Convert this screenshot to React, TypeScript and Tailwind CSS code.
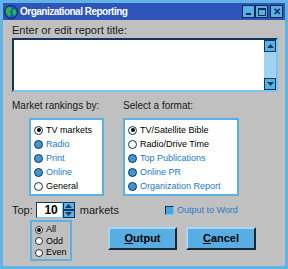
import React from 'react';

const font = { fontFamily: '"Liberation Sans", Arial, sans-serif' };

type Opt = { label: string; state: 'on' | 'off' | 'blue' };

const Radio = ({ state, size = 9 }: { state: Opt['state']; size?: number }) => (
  <span
    className={`relative inline-block shrink-0 rounded-full border border-[#14324f] ${
      state === 'blue' ? 'bg-[#3f97d6]' : 'bg-white'
    }`}
    style={{ width: size, height: size }}
  >
    {state === 'on' && (
      <span className="absolute left-1/2 top-1/2 h-[4px] w-[4px] -translate-x-1/2 -translate-y-1/2 rounded-full bg-black" />
    )}
  </span>
);

const OptionList = ({ items, className }: { items: Opt[]; className: string }) => (
  <div className={`flex flex-col border-2 border-[#5cb1e4] bg-white pt-[3px] ${className}`}>
    {items.map((it) => (
      <div key={it.label} className="flex h-[14.6px] items-center gap-[3px] pl-[3px]">
        <Radio state={it.state} />
        <span
          className={`text-[9px] leading-none ${it.state === 'blue' ? 'text-[#1f78c1]' : 'text-black'}`}
        >
          {it.label}
        </span>
      </div>
    ))}
  </div>
);

const Globe = () => (
  <svg width="14" height="14" viewBox="0 0 14 14">
    <circle cx="7" cy="7" r="6.5" fill="#1f56c8" stroke="#0b1f55" />
    <path d="M2.5 3 L6.5 1.5 L7.5 4.5 L5.5 6.5 L7 9 L5 12 L3 9.5 L1.5 6.5 Z" fill="#27b83a" />
    <path d="M8.5 4.5 L12 5 L12.5 8.5 L10 11 L8.5 8.5 Z" fill="#27b83a" />
  </svg>
);

const TitleBtn = ({ children }: { children: React.ReactNode }) => (
  <div className="flex h-[13px] w-[13px] items-center justify-center border border-[#0f2a55] bg-[#5cb1e4]">
    {children}
  </div>
);

const Arrow = ({ up }: { up?: boolean }) => (
  <svg width="7" height="4" viewBox="0 0 7 4">
    <path d={up ? 'M0 4 L3.5 0 L7 4 Z' : 'M0 0 L3.5 4 L7 0 Z'} fill="#173d66" />
  </svg>
);

export default function App() {
  return (
    <div className="h-[269px] w-[288px] bg-[#62b3e6] px-[3px] pt-[3px] pb-[3px]" style={font}>
      {/* Title bar */}
      <div className="flex h-[17px] items-center bg-[#2d55ba] pl-[1px] pr-[2px]">
        <Globe />
        <span className="ml-[2px] text-[10px] font-bold tracking-[-0.5px] text-white">
          Organizational Reporting
        </span>
        <div className="ml-auto flex">
          <TitleBtn>
            <span className="mt-[5px] h-[2px] w-[5px] bg-[#0f2a55]" />
          </TitleBtn>
          <TitleBtn>
            <span className="h-[8px] w-[8px] border border-t-2 border-[#0f2a55]" />
          </TitleBtn>
          <div className="w-[2px]" />
          <TitleBtn>
            <span className="text-[10px] font-bold leading-none text-[#0f2a55]">✕</span>
          </TitleBtn>
        </div>
      </div>

      {/* Body */}
      <div className="flex h-[246px] flex-col bg-[#c0c0c0] pl-[9px] pr-[4px]">
        <div className="mt-[4px] text-[11px] leading-[13px] text-[#1a1a1a]">Enter or edit report title:</div>
        <div className="mt-[1px] flex h-[54px] w-[266px] border-2 border-t-[#12365e] border-l-[#12365e] border-r-[#7fc4ec] border-b-[#7fc4ec] bg-white">
          <div className="flex-1" />
          <div className="flex w-[12px] flex-col bg-[#9fd3f1]">
            <div className="flex h-[12px] items-center justify-center border border-[#12365e] bg-[#5cb1e4]">
              <Arrow up />
            </div>
            <div className="flex-1" />
            <div className="flex h-[12px] items-center justify-center border border-[#12365e] bg-[#5cb1e4]">
              <Arrow />
            </div>
          </div>
        </div>

        <div className="mt-[8px] flex">
          <div className="w-[111px]">
            <div className="text-[10px] leading-[12px] text-[#1a1a1a]">Market rankings by:</div>
            <OptionList
              className="ml-[17px] mt-[6px] h-[78px] w-[75px]"
              items={[
                { label: 'TV markets', state: 'on' },
                { label: 'Radio', state: 'blue' },
                { label: 'Print', state: 'blue' },
                { label: 'Online', state: 'blue' },
                { label: 'General', state: 'off' },
              ]}
            />
          </div>
          <div>
            <div className="text-[10px] leading-[12px] text-[#1a1a1a]">Select a format:</div>
            <OptionList
              className="mt-[6px] h-[78px] w-[116px]"
              items={[
                { label: 'TV/Satellite Bible', state: 'on' },
                { label: 'Radio/Drive Time', state: 'off' },
                { label: 'Top Publications', state: 'blue' },
                { label: 'Online PR', state: 'blue' },
                { label: 'Organization Report', state: 'blue' },
              ]}
            />
          </div>
        </div>

        <div className="mt-[6px] flex items-center">
          <span className="text-[11px] leading-none text-[#1a1a1a]">Top:</span>
          <div className="ml-[3px] flex h-[16px] w-[27px] items-center justify-end border border-t-[#12365e] border-l-[#12365e] border-r-[#7fc4ec] border-b-[#7fc4ec] bg-white pr-[4px] text-[12px] font-bold">
            10
          </div>
          <div className="flex h-[16px] w-[12px] flex-col">
            <div className="flex flex-1 items-center justify-center border border-[#12365e] bg-[#5cb1e4]">
              <Arrow up />
            </div>
            <div className="flex flex-1 items-center justify-center border border-[#12365e] bg-[#5cb1e4]">
              <Arrow />
            </div>
          </div>
          <span className="ml-[5px] text-[11px] leading-none text-[#1a1a1a]">markets</span>
          <div className="ml-[46px] flex items-center gap-[3px]">
            <span className="h-[9px] w-[9px] border border-t-[#12365e] border-l-[#12365e] border-r-[#7fc4ec] border-b-[#7fc4ec] bg-[#4aa3dc]" />
            <span className="text-[9px] leading-none text-[#2a7cc0]">Output to Word</span>
          </div>
        </div>

        <div className="mt-[2px] flex items-start">
          <div className="ml-[18px] flex h-[41px] w-[42px] flex-col border-2 border-[#5cb1e4] pl-[3px] pt-[2px]">
            {[
              { label: 'All', state: 'on' as const },
              { label: 'Odd', state: 'off' as const },
              { label: 'Even', state: 'off' as const },
            ].map((it) => (
              <div key={it.label} className="flex h-[11.5px] items-center gap-[3px]">
                <Radio state={it.state} size={8} />
                <span className="text-[9px] leading-none text-black">{it.label}</span>
              </div>
            ))}
          </div>
          <button className="ml-[36px] mt-[7px] h-[23px] w-[69px] border-2 border-t-[#a7d9f5] border-l-[#a7d9f5] border-r-[#1b2735] border-b-[#1b2735] bg-[#58ade2] text-[11px] font-bold text-black">
            <span className="underline">O</span>utput
          </button>
          <button className="ml-[9px] mt-[7px] h-[23px] w-[70px] border-2 border-t-[#a7d9f5] border-l-[#a7d9f5] border-r-[#1b2735] border-b-[#1b2735] bg-[#58ade2] text-[11px] font-bold text-black">
            <span className="underline">C</span>ancel
          </button>
        </div>
      </div>
    </div>
  );
}
